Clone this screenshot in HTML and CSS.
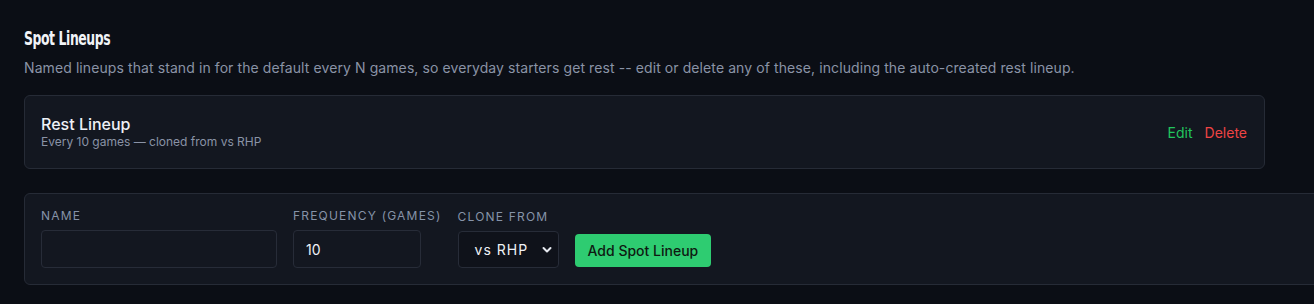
FILE: index.html
```html
<!DOCTYPE html>
<html>
<head>
<meta charset="utf-8">
<link rel="stylesheet" href="styles.css">
</head>
<body>
<section class="section">
  <h2 class="title">Spot Lineups</h2>
  <p class="desc">Named lineups that stand in for the default every N games, so everyday starters get rest -- edit or delete any of these, including the auto-created rest lineup.</p>
  <div class="card item">
    <div class="item-info">
      <div class="item-name">Rest Lineup</div>
      <div class="item-sub">Every 10 games — cloned from vs RHP</div>
    </div>
    <div class="item-actions">
      <button class="link edit">Edit</button>
      <button class="link delete">Delete</button>
    </div>
  </div>
  <div class="card form">
    <div class="field">
      <label class="label">Name</label>
      <input class="input name" type="text">
    </div>
    <div class="field">
      <label class="label">Frequency (games)</label>
      <input class="input freq" type="text" value="10">
    </div>
    <div class="field">
      <label class="label">Clone from</label>
      <div class="select">
        <span>vs RHP</span>
        <svg class="chev" width="10" height="8" viewBox="0 0 10 8"><path d="M1.5 2 L5 5.5 L8.5 2" fill="none" stroke="#e6e9ef" stroke-width="2" stroke-linecap="round" stroke-linejoin="round"/></svg>
      </div>
    </div>
    <button class="btn">Add Spot Lineup</button>
  </div>
</section>
</body>
</html>
```
FILE: styles.css
```css
html, body {
  margin: 0;
  padding: 0;
  background: #0b0e15;
  overflow: hidden;
}
body {
  font-family: Inter, "Noto Sans", sans-serif;
  color: #e6e9ef;
}
.section {
  padding: 25px 0 0 24px;
}
.title {
  margin: 0;
  font-family: "DejaVu Sans Condensed", "DejaVu Sans", sans-serif;
  font-weight: 700;
  font-size: 20px;
  letter-spacing: -0.6px;
  line-height: 26px;
  color: #f1f3f7;
  transform: scaleX(0.69);
  transform-origin: left center;
}
.desc {
  margin: 7px 0 0;
  font-size: 14px;
  line-height: 20px;
  letter-spacing: 0.09px;
  color: #8a93a6;
}
.card {
  background: #131720;
  border: 1px solid #262b36;
  border-radius: 6px;
  box-sizing: border-box;
}
.item {
  margin-top: 17px;
  width: 1241px;
  height: 74px;
  padding: 0 16px;
  display: flex;
  align-items: center;
  justify-content: space-between;
}
.item-name {
  font-size: 16px;
  line-height: 20px;
  font-weight: 500;
  color: #eef1f6;
}
.item-sub {
  font-size: 12px;
  line-height: 16px;
  color: #8a93a6;
}
.item-actions {
  display: flex;
  gap: 12px;
  padding-right: 1px;
}
.link {
  background: none;
  border: 0;
  padding: 0;
  font-family: inherit;
  font-size: 14px;
  cursor: pointer;
}
.edit { color: #22c55e; }
.delete { color: #ef4444; }
.form {
  margin-top: 24px;
  width: 1320px;
  height: 92px;
  padding: 14px 16px 16px;
  display: flex;
  align-items: flex-end;
  gap: 16px;
}
.field {
  display: flex;
  flex-direction: column;
  gap: 6px;
}
.label {
  font-size: 12px;
  line-height: 16px;
  letter-spacing: 1.2px;
  text-transform: uppercase;
  color: #8693a8;
  white-space: nowrap;
}
.input {
  box-sizing: border-box;
  height: 38px;
  background: #131720;
  border: 1px solid #272c38;
  border-radius: 4px;
  color: #eef1f6;
  font-family: inherit;
  font-size: 14px;
  padding: 0 12px;
  outline: none;
}
.name { width: 236px; }
.freq { width: 128px; }
.select {
  box-sizing: border-box;
  height: 37px;
  width: 101px;
  background: #0f121a;
  border: 1px solid #272c38;
  border-radius: 4px;
  display: flex;
  align-items: center;
  justify-content: space-between;
  padding: 0 6px 0 16px;
  font-size: 14px;
  letter-spacing: 1px;
  color: #eef1f6;
}
.btn {
  height: 33px;
  padding: 0 13px;
  background: #2ecc71;
  border: 0;
  border-radius: 4px;
  font-family: inherit;
  font-size: 14px;
  font-weight: 500;
  color: #0e1a12;
  margin-bottom: 1px;
}
```
